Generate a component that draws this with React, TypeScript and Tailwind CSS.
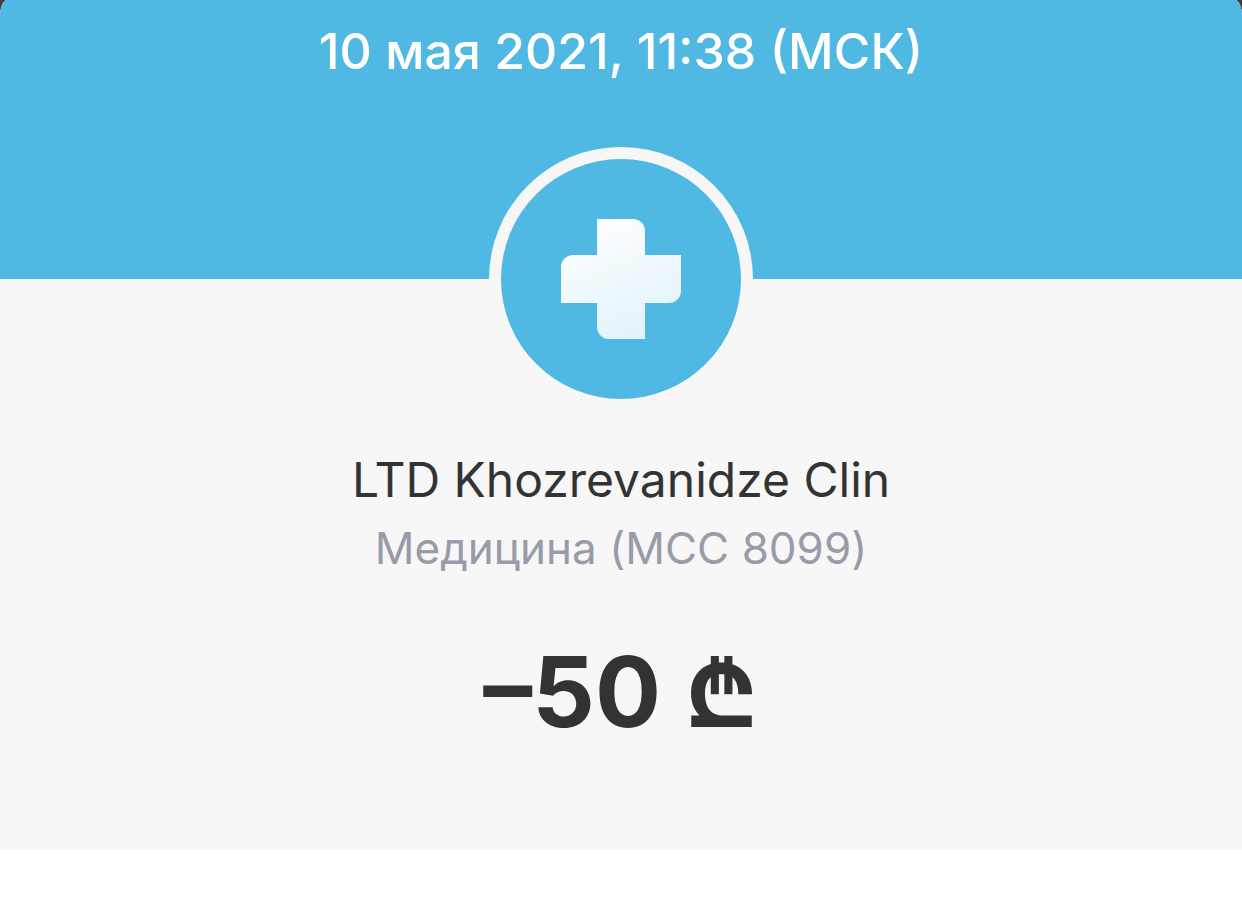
import React from "react";

const CrossIcon: React.FC = () => (
  <svg width="120" height="120" viewBox="0 0 120 120">
    <defs>
      <linearGradient id="cross" x1="0.3" y1="0" x2="0.7" y2="1">
        <stop offset="0" stopColor="#ffffff" />
        <stop offset="1" stopColor="#e0f2fa" />
      </linearGradient>
    </defs>
    <path
      d="M36 0H72A12 12 0 0 1 84 12V36H120V72A12 12 0 0 1 108 84H84V120H48A12 12 0 0 1 36 108V84H0V48A12 12 0 0 1 12 36H36Z"
      fill="url(#cross)"
    />
  </svg>
);

export default function App() {
  return (
    <div className="min-h-[919px] bg-white font-['Inter',sans-serif]">
      <div className="h-[849px] bg-[#45403f]">
        <div className="h-full overflow-hidden rounded-t-[7px_16px] bg-[#f7f7f7]">
          <div className="h-[279px] bg-[#50b9e3] pt-[21px] text-center text-[50px] leading-[60px] font-medium text-white">
            10 мая 2021, 11:38 (МСК)
          </div>
          <div className="flex flex-col items-center">
            <div className="-mt-[132px] flex h-[264px] w-[264px] items-center justify-center rounded-full bg-[#f7f7f7]">
              <div className="flex h-[240px] w-[240px] items-center justify-center rounded-full bg-[#50b9e3]">
                <CrossIcon />
              </div>
            </div>
            <div className="mt-[39px] text-[48px] leading-[60px] text-[#333333]">
              LTD Khozrevanidze Clin
            </div>
            <div className="mt-[11px] text-[44px] leading-[54px] text-[#989ca8]">
              Медицина (MCC 8099)
            </div>
            <div className="mt-[62px] text-[98px] leading-[110px] font-bold text-[#333333]">
              –50 ₾
            </div>
          </div>
        </div>
      </div>
    </div>
  );
}
